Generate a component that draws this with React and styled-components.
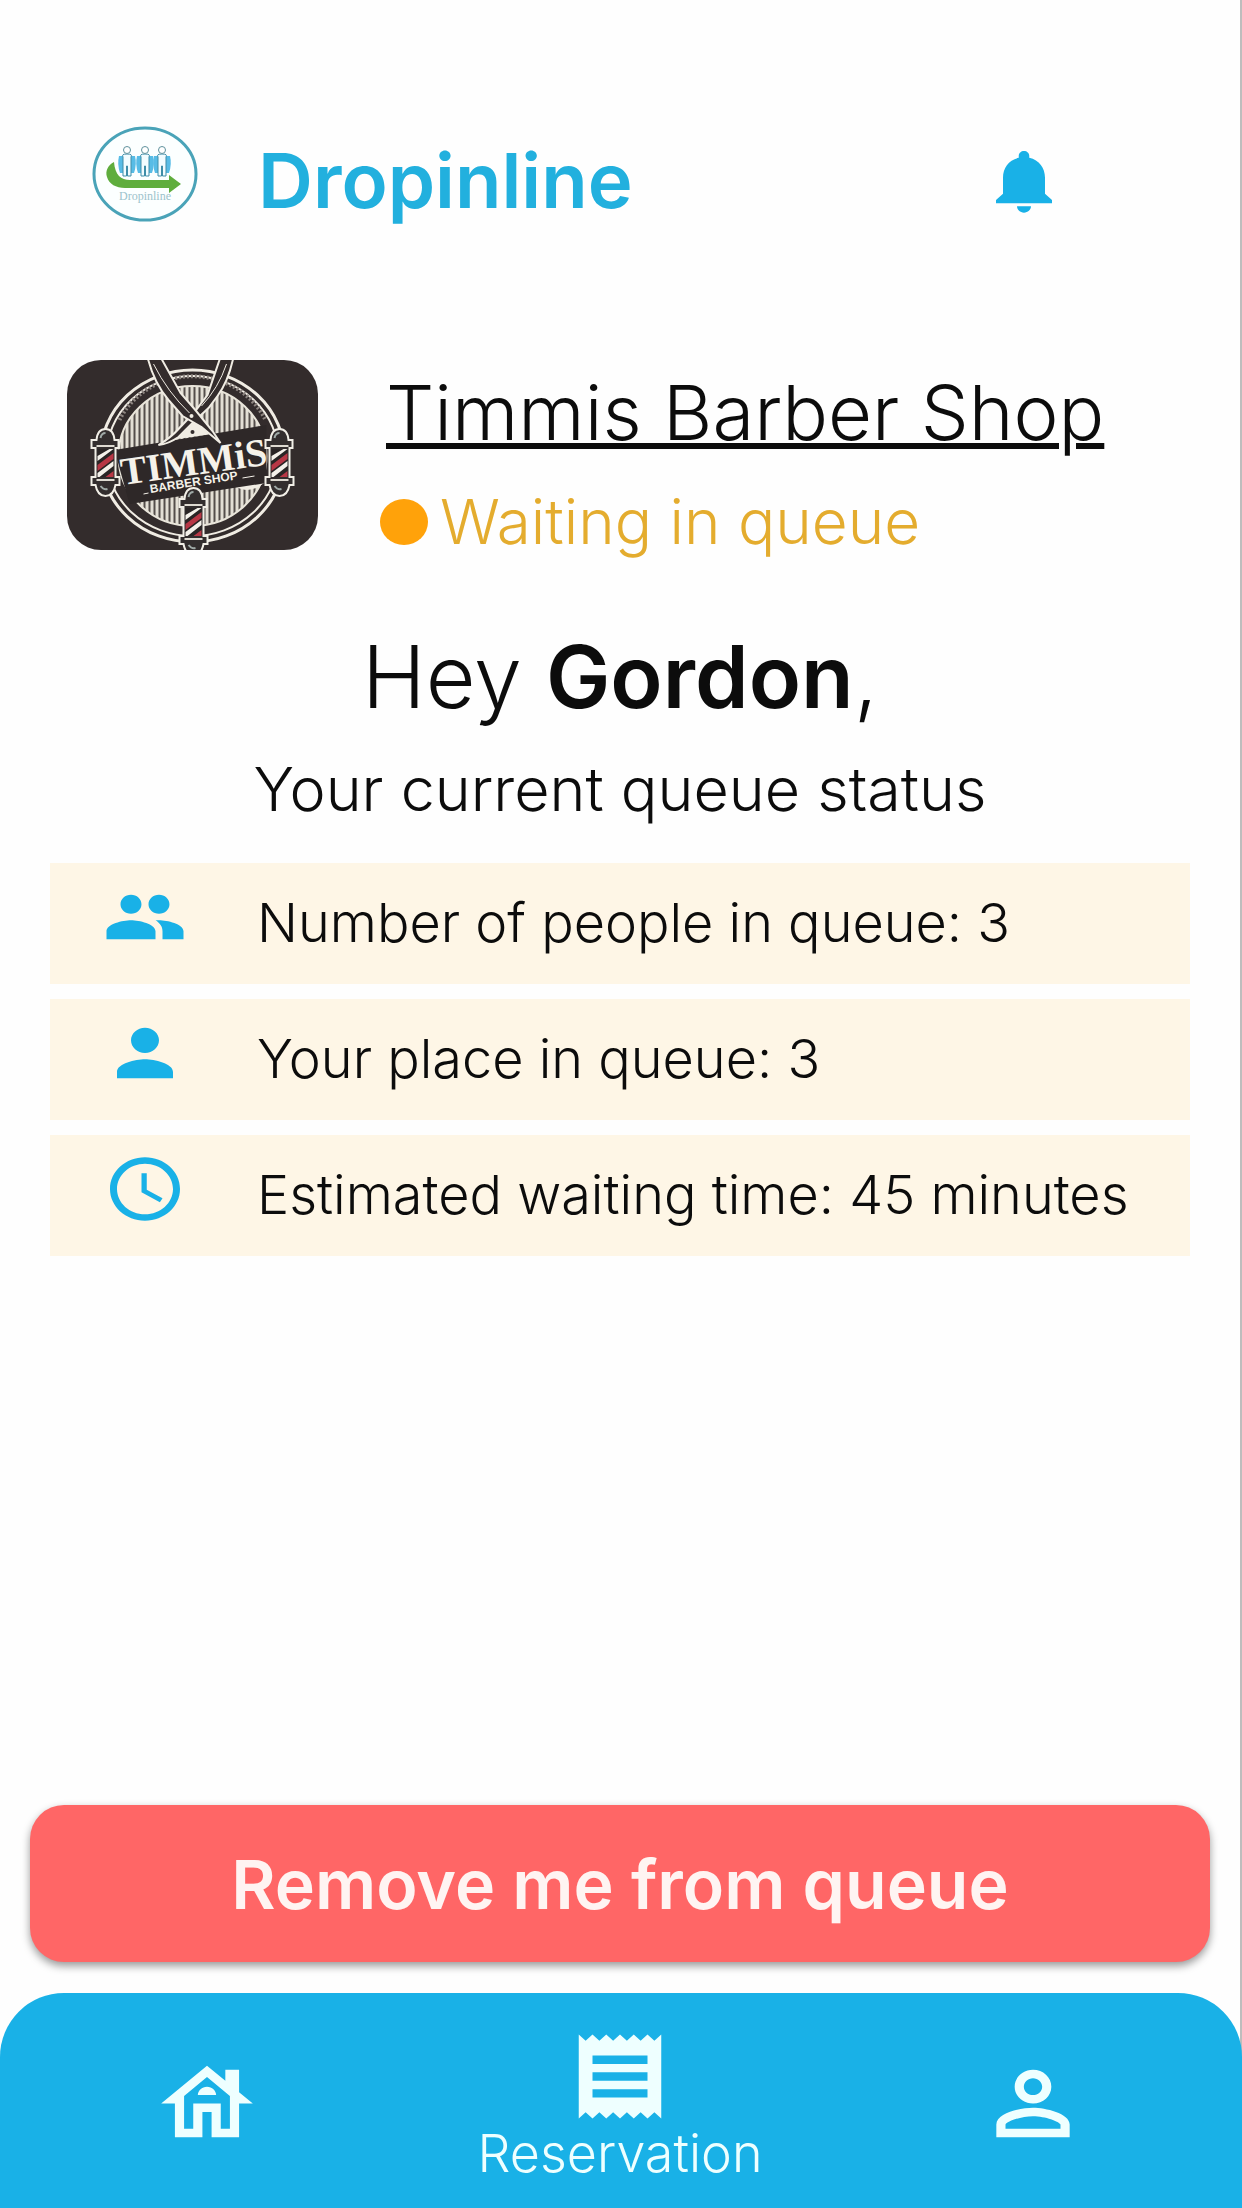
import React from "react";
import styled, { createGlobalStyle } from "styled-components";

const GlobalStyle = createGlobalStyle`
  * {
    box-sizing: border-box;
  }

  body {
    margin: 0;
    background: #fefefe;
    color: #0c0c0c;
    font-family: Inter, sans-serif;
    font-weight: 300;
  }
`;

const Page = styled.div`
  display: flex;
  flex-direction: column;
  min-height: 100vh;
  border-right: 2px solid #bdbdbd;
`;

const Header = styled.header`
  display: flex;
  align-items: center;
  padding: 124px 174px 0 92px;
`;

const Brand = styled.h1`
  flex: 1;
  margin: 0 0 0 60px;
  padding-top: 12px;
  color: #22b0de;
  font-size: 76px;
  font-weight: 600;
  line-height: 88px;
`;

const IconButton = styled.button`
  display: flex;
  padding: 14px 0 0;
  border: 0;
  background: none;
  color: #19b1e7;
  cursor: pointer;
`;

const Main = styled.main`
  display: flex;
  flex: 1;
  flex-direction: column;
`;

const Shop = styled.section`
  display: flex;
  gap: 62px;
  padding: 136px 66px 0 67px;
`;

const ShopPhoto = styled.svg`
  flex: none;
  width: 251px;
  height: 190px;
  border-radius: 34px;
`;

const ShopInfo = styled.div`
  display: flex;
  flex-direction: column;
  gap: 40px;
  padding-top: 14px;
`;

const ShopName = styled.a`
  padding-left: 6px;
  color: inherit;
  font-size: 76px;
  line-height: 76px;
  white-space: nowrap;
  text-decoration: underline;
  text-decoration-thickness: 6px;
`;

const Status = styled.p`
  display: flex;
  align-items: center;
  gap: 12px;
  margin: 0;
  color: #e4ac2e;
  font-size: 62px;
  line-height: 64px;
  white-space: nowrap;
`;

const Dot = styled.span`
  width: 48px;
  height: 46px;
  border-radius: 50%;
  background: #ffa20a;
`;

const Greeting = styled.h2`
  margin: 79px 0 0;
  font-size: 86px;
  font-weight: inherit;
  line-height: 88px;
  text-align: center;

  strong {
    font-weight: 600;
  }
`;

const Subtitle = styled.p`
  margin: 36px 0 0;
  font-size: 61px;
  line-height: 64px;
  text-align: center;
`;

const Stats = styled.ul`
  display: flex;
  flex-direction: column;
  gap: 15px;
  margin: 42px 50px 0;
  padding: 0;
  list-style: none;
`;

const Stat = styled.li`
  display: flex;
  align-items: center;
  gap: 70px;
  height: 121px;
  padding: 0 20px 14px 53px;
  background: #fef6e6;
  font-size: 54px;
  white-space: nowrap;

  svg {
    color: #19b1e7;
  }
`;

const StatText = styled.span`
  padding-top: 12px;
`;

const RemoveButton = styled.button`
  height: 157px;
  margin: auto 30px 31px;
  border: 0;
  border-radius: 34px;
  background: #ff6666;
  box-shadow: 0 4px 8px rgba(0, 0, 0, 0.4);
  color: #fff4f2;
  font-family: inherit;
  font-size: 68px;
  font-weight: 600;
  cursor: pointer;
`;

const TabBar = styled.nav`
  display: flex;
  height: 215px;
  margin-right: -2px;
  padding: 5px 2px 0 0;
  border-radius: 64px 64px 0 0;
  background: #19b1e7;
`;

const Tab = styled.a`
  display: flex;
  flex: 1;
  flex-direction: column;
  align-items: center;
  justify-content: center;
  color: #eeffff;
  font-size: 52px;
  line-height: 54px;
  text-decoration: none;
`;

const Icon = styled.svg.attrs({
  viewBox: "0 0 24 24",
  preserveAspectRatio: "none",
  "aria-hidden": true,
})`
  flex: none;
  width: ${({ $large }) => ($large ? 110 : 84)}px;
  height: ${({ $large }) => ($large ? 101 : 76)}px;
  fill: currentColor;
`;

const LogoSvg = styled.svg`
  flex: none;
  width: 106px;
  height: 98px;
`;

const icons = {
  bell: "M12 22c1.100 0 2-.9 2-2h-4c0 1.100.9 2 2 2zm6-6v-5c0-3.070-1.640-5.640-4.500-6.320V4c0-.83-.67-1.500-1.500-1.500s-1.500.67-1.500 1.500v.68C7.630 5.360 6 7.920 6 11v5l-2 2v1h16v-1l-2-2z",
  people:
    "M16 11c1.660 0 2.990-1.340 2.990-3S17.660 5 16 5s-3 1.340-3 3 1.340 3 3 3zm-8 0c1.660 0 2.990-1.340 2.990-3S9.660 5 8 5 5 6.340 5 8s1.340 3 3 3zm0 2c-2.330 0-7 1.170-7 3.500V19h14v-2.500c0-2.330-4.670-3.500-7-3.500zm8 0c-.29 0-.62.02-.97.05 1.160.84 1.970 1.970 1.970 3.450V19h6v-2.500c0-2.330-4.670-3.500-7-3.500z",
  person:
    "M12 12c2.210 0 4-1.790 4-4s-1.790-4-4-4-4 1.790-4 4 1.790 4 4 4zm0 2c-2.670 0-8 1.340-8 4v2h16v-2c0-2.660-5.330-4-8-4z",
  clock:
    "M11.990 2C6.470 2 2 6.480 2 12s4.470 10 9.990 10C17.520 22 22 17.520 22 12S17.520 2 11.990 2zM12 20c-4.420 0-8-3.580-8-8s3.580-8 8-8 8 3.580 8 8-3.580 8-8 8zm.5-13H11v6l5.250 3.150.75-1.230-4.500-2.670z",
  house:
    "M19 9.300V4h-3v2.600L12 3 2 12h3v8h6v-6h2v6h6v-8h3l-3-2.700zM17 18h-2v-6H9v6H7v-7.810l5-4.500 5 4.500V18zM10 10h4c0-1.100-.9-2-2-2s-2 .9-2 2z",
  receipt:
    "M18 17H6v-2h12v2zm0-4H6v-2h12v2zm0-4H6V7h12v2zM3 22l1.500-1.500L6 22l1.500-1.500L9 22l1.500-1.500L12 22l1.500-1.500L15 22l1.500-1.500L18 22l1.500-1.500L21 22V2l-1.500 1.500L18 2l-1.500 1.500L15 2l-1.500 1.500L12 2l-1.500 1.500L9 2 7.500 3.500 6 2 4.500 3.500 3 2v20z",
  account:
    "M12 6c1.100 0 2 .9 2 2s-.9 2-2 2-2-.9-2-2 .9-2 2-2m0 9c2.700 0 5.800 1.290 6 2v1H6v-.99c.2-.72 3.300-2.010 6-2.010m0-11C9.790 4 8 5.790 8 8s1.790 4 4 4 4-1.790 4-4-1.790-4-4-4zm0 9c-2.670 0-8 1.340-8 4v3h16v-3c0-2.660-5.330-4-8-4z",
};

const stats = [
  { icon: "people", text: "Number of people in queue: 3" },
  { icon: "person", text: "Your place in queue: 3" },
  { icon: "clock", text: "Estimated waiting time: 45 minutes" },
];

const Logo = () => (
  <LogoSvg viewBox="0 0 106 98" role="img" aria-label="Dropinline logo">
    <ellipse cx="53" cy="49" rx="51" ry="46" fill="#fcffff" stroke="#4aa3b8" strokeWidth="3" />
    {[35, 53, 70].map((x) => (
      <g key={x} transform={`translate(${x} 0)`}>
        <path d="M-8 31q-2 8 1 17h14q3-9 1-17z" fill="#58bce6" />
        <path
          d="M-4 32v19h3.500V41h1V51H4V32q2-3-4-3t-4 3z"
          fill="#f2fcff"
          stroke="#3f8da8"
          strokeWidth="1"
        />
        <circle cy="25" r="3.500" fill="#fff" stroke="#5f929d" strokeWidth="1" />
      </g>
    ))}
    <path
      d="M22 37c-6 3-9 9-7 15 2 7 9 11 18 11h44v5l12-9-12-9v5H38c-9 0-15-5-16-18z"
      fill="#5fad3d"
    />
    <text
      x="53"
      y="75"
      textAnchor="middle"
      fontFamily="Liberation Serif, serif"
      fontSize="12"
      fontWeight="400"
      fill="#9cc3cc"
    >
      Dropinline
    </text>
  </LogoSvg>
);

const BarberPole = ({ x, y }) => (
  <g transform={`translate(${x} ${y})`}>
    <path
      d="M-9 10q1-11 9-11t9 11h4v8h-3v29h4v8h-4q-2 11-10 11t-10-11h-4v-8h4V18h-4v-8z"
      fill="#332e2e"
      stroke="#f1eee6"
      strokeWidth="2"
    />
    <path d="M-9 16H9M-9 50H9" stroke="#dedad1" strokeWidth="2" />
    <path d="M-5 8q1-5 5-5M-5 56q3 4 7 3" fill="none" stroke="#9fa9a6" strokeWidth="2" />
    <path d="M-8 19H8v28H-8z" fill="#292525" />
    <path d="M-8 26 4 19h4l-16 12zM-8 43 8 31v5L-6 47h-2z" fill="#f4f1ea" />
    <path d="M-8 35 8 23v6L-8 41zM0 47l8-6v6z" fill="#b73745" />
  </g>
);

const ShopLogo = () => (
  <ShopPhoto
    viewBox="0 0 252 190"
    preserveAspectRatio="xMidYMid slice"
    role="img"
    aria-label="Timmis Barber Shop logo"
  >
    <defs>
      <pattern id="stripes" width="5" height="8" patternUnits="userSpaceOnUse">
        <path d="M0 0h5v8H0z" fill="#e3dfd5" />
        <path d="M2 0h2v8H2z" fill="#544e4b" />
      </pattern>
    </defs>
    <path d="M0 0h252v190H0z" fill="#332c2c" />
    <g fill="none" stroke="#f0ece3">
      <ellipse cx="126" cy="96" rx="92" ry="86" strokeWidth="3" />
      <ellipse cx="126" cy="96" rx="86" ry="80" strokeWidth="2" />
      <path d="M53 60A80 74 0 0 1 199 60" stroke="#8d8580" strokeWidth="4" strokeDasharray="2 2" />
    </g>
    <ellipse cx="126" cy="96" rx="74" ry="70" fill="url(#stripes)" stroke="#e9e5da" strokeWidth="2" />
    <path d="m126 58-22 22 42-6z" fill="#f0ece3" />
    <path d="M170 124q13 8 26-3" fill="none" stroke="#f0ece3" strokeWidth="5" />
    <path d="m48 90 152-25v58L63 144z" fill="#2e2828" />
    <g fill="#332c2c" stroke="#f0ece3" strokeWidth="2">
      <path d="M167-3q-5 24-16 39l-9 12-16 15-14 14q-10 7-20 8 12-7 20-16l16-17 13-17L154-3z" />
      <path d="M81-3q6 25 21 43l14 16 19 11 19 16-8-12-18-22-14-16L94-3z" />
      <path d="M87 4q14 28 36 49M160 4q-8 24-25 42" fill="none" strokeWidth="1" />
    </g>
    <circle cx="125" cy="56" r="2" fill="#f0ece3" />
    <circle cx="126" cy="72" r="2" fill="#332c2c" />
    <g fontFamily="Liberation Serif, serif" fontWeight="700" fill="#f5f2ea">
      <text transform="rotate(-8 56 125)" x="56" y="125" fontSize="39">
        TIMMiS
      </text>
      <text
        transform="rotate(-9 84 133)"
        x="84"
        y="133"
        fontFamily="Liberation Sans, sans-serif"
        fontSize="12"
      >
        BARBER SHOP
      </text>
    </g>
    <path d="m77 134 5-1m94-15 12-2" stroke="#f5f2ea" strokeWidth="1" />
    <BarberPole x={39} y={70} />
    <BarberPole x={213} y={70} />
    <BarberPole x={127} y={129} />
  </ShopPhoto>
);

const Glyph = ({ name, large }) => (
  <Icon $large={large}>
    <path d={icons[name]} />
  </Icon>
);

const App = () => {
  return (
    <Page>
      <GlobalStyle />
      <Header>
        <Logo />
        <Brand>Dropinline</Brand>
        <IconButton type="button" aria-label="Notifications">
          <Glyph name="bell" />
        </IconButton>
      </Header>
      <Main>
        <Shop>
          <ShopLogo />
          <ShopInfo>
            <ShopName href="#shop">Timmis Barber Shop</ShopName>
            <Status>
              <Dot />
              Waiting in queue
            </Status>
          </ShopInfo>
        </Shop>
        <Greeting>
          Hey <strong>Gordon</strong>,
        </Greeting>
        <Subtitle>Your current queue status</Subtitle>
        <Stats>
          {stats.map(({ icon, text }) => (
            <Stat key={icon}>
              <Glyph name={icon} />
              <StatText>{text}</StatText>
            </Stat>
          ))}
        </Stats>
        <RemoveButton type="button">Remove me from queue</RemoveButton>
      </Main>
      <TabBar>
        <Tab href="#home" aria-label="Home">
          <Glyph name="house" large />
        </Tab>
        <Tab href="#reservation" aria-current="page">
          <Glyph name="receipt" large />
          Reservation
        </Tab>
        <Tab href="#account" aria-label="Account">
          <Glyph name="account" large />
        </Tab>
      </TabBar>
    </Page>
  );
};

export default App;
